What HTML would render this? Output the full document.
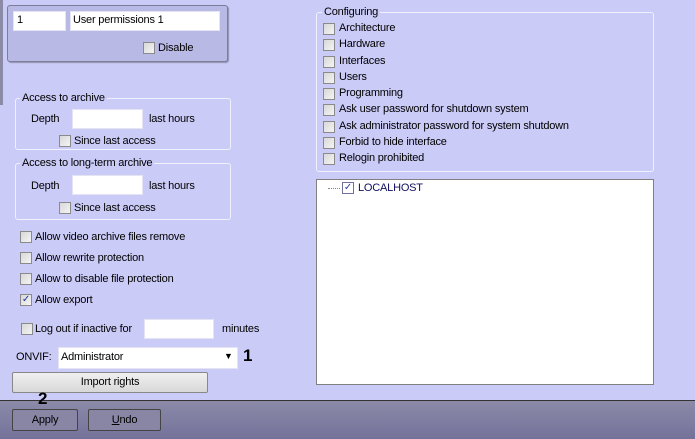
<!DOCTYPE html>
<html><head><style>
body{margin:0;width:695px;height:438px;background:#cbcbf8;font-family:"Liberation Sans",Arial,sans-serif;font-size:11px;letter-spacing:-0.2px;color:#000;position:relative;overflow:hidden}
.a{position:absolute;white-space:nowrap}
.cb{position:absolute;width:10px;height:10px;border:1px solid #8a8a8a;background:linear-gradient(135deg,#d8d8d8,#f4f4f4)}
.inp{position:absolute;background:#fff;border:1px solid #e4e4f4}
.grp{position:absolute;border:1px solid #f0f0ff;border-radius:3px}
.lg{position:absolute;background:#cbcbf8;padding:0 2px}
.btn{position:absolute;border:1px solid #666;border-radius:2px;text-align:center}
</style></head><body>
<div class="a" style="left:0;top:0;width:3px;height:105px;background:#8b8ba8"></div>
<div class="a" style="left:7px;top:5px;width:219px;height:55px;background:#b9b9e6;border:1px solid #7d7d9a;border-radius:3px;box-shadow:1px 1px 1px #9090b0"></div>
<div class="inp" style="left:13px;top:11px;width:51px;height:18px"></div><div class="a" style="left:17px;top:14px">1</div>
<div class="inp" style="left:70px;top:11px;width:148px;height:18px"></div><div class="a" style="left:73px;top:14px">User permissions 1</div>
<div class="cb" style="left:143px;top:42px"></div><div class="a" style="left:158px;top:42px">Disable</div>

<div class="grp" style="left:15px;top:98px;width:214px;height:50px"></div>
<div class="lg" style="left:20px;top:92px">Access to archive</div>
<div class="a" style="left:31px;top:113px">Depth</div>
<div class="inp" style="left:72px;top:109px;width:69px;height:18px"></div>
<div class="a" style="left:149px;top:113px">last hours</div>
<div class="cb" style="left:59px;top:135px"></div><div class="a" style="left:74px;top:135px">Since last access</div>

<div class="grp" style="left:15px;top:163px;width:214px;height:55px"></div>
<div class="lg" style="left:20px;top:157px">Access to long-term archive</div>
<div class="a" style="left:31px;top:180px">Depth</div>
<div class="inp" style="left:72px;top:175px;width:69px;height:18px"></div>
<div class="a" style="left:149px;top:180px">last hours</div>
<div class="cb" style="left:59px;top:202px"></div><div class="a" style="left:74px;top:202px">Since last access</div>

<div class="cb" style="left:20px;top:231px"></div><div class="a" style="left:35px;top:231px">Allow video archive files remove</div>
<div class="cb" style="left:20px;top:252px"></div><div class="a" style="left:35px;top:252px">Allow rewrite protection</div>
<div class="cb" style="left:20px;top:273px"></div><div class="a" style="left:35px;top:273px">Allow to disable file protection</div>
<div class="cb" style="left:20px;top:294px;font-size:10px;line-height:10px;color:#2030a0;text-align:center">✓</div><div class="a" style="left:35px;top:294px">Allow export</div>

<div class="cb" style="left:21px;top:323px"></div><div class="a" style="left:35px;top:323px">Log out if inactive for</div>
<div class="inp" style="left:144px;top:319px;width:68px;height:18px"></div>
<div class="a" style="left:222px;top:323px">minutes</div>

<div class="a" style="left:16px;top:351px">ONVIF:</div>
<div class="inp" style="left:58px;top:347px;width:178px;height:20px"></div>
<div class="a" style="left:61px;top:351px">Administrator</div>
<div class="a" style="left:224px;top:351px;font-size:9px">▼</div>
<div class="a" style="left:243px;top:346px;font-size:17px;font-weight:bold">1</div>

<div class="btn" style="left:12px;top:372px;width:194px;height:19px;background:linear-gradient(#f0f0f0,#d8d8d8);border-color:#888;line-height:19px">Import rights</div>

<div class="a" style="left:0;top:400px;width:695px;height:38px;background:linear-gradient(#8c8aa8,#74729a);border-top:1px solid #333"></div>
<div class="a" style="left:38px;top:389px;font-size:17px;font-weight:bold">2</div>
<div class="btn" style="left:12px;top:409px;width:64px;height:20px;background:#8886a4;border-color:#444;line-height:20px">Apply</div>
<div class="btn" style="left:88px;top:409px;width:71px;height:20px;background:#8886a4;border-color:#444;line-height:20px"><u>U</u>ndo</div>

<div class="grp" style="left:316px;top:12px;width:336px;height:158px"></div>
<div class="lg" style="left:322px;top:6px">Configuring</div>
<div class="cb" style="left:323px;top:23px"></div><div class="a" style="left:339px;top:22px">Architecture</div>
<div class="cb" style="left:323px;top:39px"></div><div class="a" style="left:339px;top:38px">Hardware</div>
<div class="cb" style="left:323px;top:56px"></div><div class="a" style="left:339px;top:55px">Interfaces</div>
<div class="cb" style="left:323px;top:72px"></div><div class="a" style="left:339px;top:71px">Users</div>
<div class="cb" style="left:323px;top:88px"></div><div class="a" style="left:339px;top:87px">Programming</div>
<div class="cb" style="left:323px;top:104px"></div><div class="a" style="left:339px;top:103px">Ask user password for shutdown system</div>
<div class="cb" style="left:323px;top:121px"></div><div class="a" style="left:339px;top:120px">Ask administrator password for system shutdown</div>
<div class="cb" style="left:323px;top:137px"></div><div class="a" style="left:339px;top:136px">Forbid to hide interface</div>
<div class="cb" style="left:323px;top:153px"></div><div class="a" style="left:339px;top:152px">Relogin prohibited</div>

<div class="a" style="left:316px;top:179px;width:336px;height:204px;background:#fff;border:1px solid #808080"></div>
<div class="a" style="left:328px;top:188px;width:12px;border-top:1px dotted #888"></div>
<div class="cb" style="left:342px;top:182px;width:10px;height:10px;background:#fff;border-color:#7070a0;font-size:10px;line-height:10px;color:#3040a0;text-align:center">✓</div>
<div class="a" style="left:358px;top:182px;color:#101060">LOCALHOST</div>
</body></html>
